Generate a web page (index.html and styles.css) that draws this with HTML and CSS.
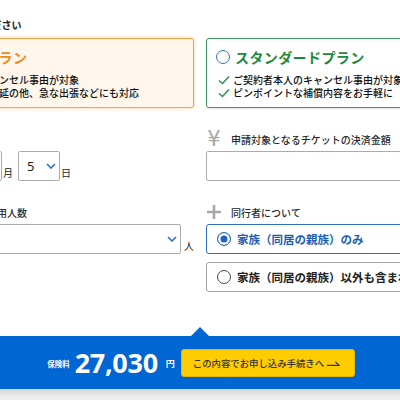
FILE: index.html
```html
<!DOCTYPE html>
<html lang="ja">
<head>
<meta charset="utf-8">
<link rel="stylesheet" href="styles.css">
</head>
<body>
<main class="page">
  <h2 class="step-title">プランを選んでください</h2>
  <div class="grid">
    <div class="plan plan-wide">
      <div class="plan-head"><span class="radio radio-orange"></span><span class="plan-name">ワイドプラン</span></div>
      <ul class="plan-points">
        <li><svg class="check" viewBox="0 0 12 10"><path d="M1 5.5 L4.5 8.5 L11 1.5"/></svg>ご本人のキャンセル事由が対象</li>
        <li><svg class="check" viewBox="0 0 12 10"><path d="M1 5.5 L4.5 8.5 L11 1.5"/></svg>交通機関の遅延の他、急な出張などにも対応</li>
      </ul>
    </div>
    <div class="plan plan-standard">
      <div class="plan-head"><span class="radio radio-blue"></span><span class="plan-name">スタンダードプラン</span></div>
      <ul class="plan-points">
        <li><svg class="check" viewBox="0 0 12 10"><path d="M1 5.5 L4.5 8.5 L11 1.5"/></svg>ご契約者本人のキャンセル事由が対象</li>
        <li><svg class="check" viewBox="0 0 12 10"><path d="M1 5.5 L4.5 8.5 L11 1.5"/></svg>ピンポイントな補償内容をお手軽に</li>
      </ul>
    </div>

    <div class="field">
      <div class="field-label"><span class="field-icon"></span>ご出発日</div>
      <div class="date-row">
        <div class="select sel-year"><span>2024</span></div><span class="unit">年</span>
        <div class="select sel-small"><span>4</span><svg class="chev" viewBox="0 0 10 6"><path d="M1 1 L5 5 L9 1"/></svg></div><span class="unit">月</span>
        <div class="select sel-small"><span>5</span><svg class="chev" viewBox="0 0 10 6"><path d="M1 1 L5 5 L9 1"/></svg></div><span class="unit">日</span>
      </div>
    </div>
    <div class="field">
      <div class="field-label"><span class="field-icon yen">¥</span>申請対象となるチケットの決済金額</div>
      <div class="input"></div>
    </div>

    <div class="field">
      <div class="field-label"><span class="field-icon"></span>参加者のご利用人数</div>
      <div class="people-row">
        <div class="select sel-wide"><span></span><svg class="chev" viewBox="0 0 10 6"><path d="M1 1 L5 5 L9 1"/></svg></div><span class="unit">人</span>
      </div>
    </div>
    <div class="field">
      <div class="field-label"><span class="field-icon"><svg viewBox="0 0 16 16" class="plus"><path d="M8 1 V15 M1 8 H15"/></svg></span>同行者について</div>
      <div class="options">
        <div class="option option-on"><span class="radio radio-dot"></span>家族（同居の親族）のみ</div>
        <div class="option"><span class="radio radio-empty"></span>家族（同居の親族）以外も含まれる</div>
      </div>
    </div>
  </div>
</main>
<footer class="bar">
  <div class="bar-inner">
    <span class="price-label">保険料</span>
    <span class="price">27,030</span>
    <span class="yen-unit">円</span>
    <button class="cta">この内容でお申し込み手続きへ<svg class="cta-arrow" viewBox="0 0 14 6"><path d="M0 5.5 H13 L9 1.5"/></svg></button>
  </div>
</footer>
<div class="below"></div>
</body>
</html>
```
FILE: styles.css
```css
* { box-sizing: border-box; }
html, body { margin: 0; padding: 0; }
body {
  width: 400px;
  height: 400px;
  overflow: hidden;
  background: #fff;
  font-family: "Noto Sans CJK JP", "Noto Sans", sans-serif;
  color: #333;
}
.page {
  width: 576px;
  margin-left: -88px;
  padding-top: 18px;
}
.step-title {
  margin: 0 0 6px;
  font-size: 10px;
  line-height: 14px;
  font-weight: 700;
  color: #222;
}
.grid {
  display: grid;
  grid-template-columns: 282px 282px;
  column-gap: 12px;
  row-gap: 24px;
}
.plan {
  height: 70px;
  border-radius: 3px;
  padding: 8px 10px 0 9px;
}
.plan-wide {
  background: #fff7ec;
  border: 1px solid #f0a445;
  box-shadow: 0 0 4px rgba(240, 160, 60, 0.45);
}
.plan-standard {
  background: #fff;
  border: 1px solid #3f9a5e;
  box-shadow: 0 1px 2px rgba(0, 0, 0, 0.12);
}
.plan-head {
  display: flex;
  align-items: center;
  gap: 5px;
  height: 20px;
}
.plan-name {
  font-size: 14px;
  font-weight: 700;
  letter-spacing: 0.4px;
  white-space: nowrap;
}
.plan-wide .plan-name { color: #ee8a1c; }
.plan-standard .plan-name { color: #1d8a3b; }
.radio {
  width: 14px;
  height: 14px;
  border-radius: 50%;
  flex: none;
  background: #fff;
}
.radio-blue { border: 1.5px solid #3a72c4; }
.radio-orange { border: 1.5px solid #ee8a1c; box-shadow: inset 0 0 0 2.5px #fff; background: #ee8a1c; }
.plan-points {
  list-style: none;
  margin: 6px 0 0;
  padding: 0 0 0 2px;
}
.plan-points li {
  display: flex;
  align-items: center;
  gap: 3px;
  font-size: 10px;
  line-height: 13px;
  font-weight: 500;
  color: #111;
  white-space: nowrap;
}
.check {
  width: 12px;
  height: 10px;
  flex: none;
  fill: none;
  stroke: #2f9650;
  stroke-width: 1.6;
}
.field-label {
  display: flex;
  align-items: center;
  gap: 9px;
  height: 14px;
  margin-bottom: 5px;
  font-size: 10px;
  font-weight: 500;
  color: #2a2a2a;
  white-space: nowrap;
}
.field-icon {
  width: 16px;
  height: 16px;
  flex: none;
  display: flex;
  align-items: center;
  justify-content: center;
  color: #a8a8a8;
}
.yen {
  font-family: "DejaVu Sans", sans-serif;
  font-size: 21px;
  line-height: 16px;
}
.plus {
  width: 16px;
  height: 16px;
  fill: none;
  stroke: #a8a8a8;
  stroke-width: 2.6;
}
.date-row, .people-row {
  display: flex;
  align-items: flex-end;
  height: 30px;
}
.select {
  height: 30px;
  border: 1px solid #ababab;
  border-radius: 2px;
  background: #fff;
  display: flex;
  align-items: center;
  justify-content: space-between;
  padding: 0 3px 0 8px;
  font-family: "Noto Sans", sans-serif;
  font-size: 13px;
  color: #222;
}
.sel-year { width: 32px; }
.sel-small { width: 42px; }
.sel-wide { flex: 1; }
.chev {
  width: 10px;
  height: 6px;
  fill: none;
  stroke: #2a70d0;
  stroke-width: 1.6;
}
.unit {
  font-size: 10px;
  line-height: 14px;
  margin: 0 5px 1px 1px;
  color: #222;
}
.people-row .unit { margin: 0 0 1px 3px; }
.input {
  height: 30px;
  border: 1px solid #ababab;
  border-radius: 2px;
}
.options {
  display: flex;
  flex-direction: column;
  gap: 8px;
}
.option {
  height: 30px;
  border: 1px solid #a0a0a0;
  border-radius: 3px;
  display: flex;
  align-items: center;
  gap: 6px;
  padding-left: 10px;
  font-size: 11.5px;
  font-weight: 700;
  color: #222;
  white-space: nowrap;
}
.option-on {
  border-color: #2d6fc2;
  color: #1b5fb5;
}
.radio-dot {
  border: 1.5px solid #2d6fc2;
  box-shadow: inset 0 0 0 2.5px #fff;
  background: #1e63c4;
}
.radio-empty { border: 1.3px solid #444; }
.bar {
  position: relative;
  margin-top: 44px;
  height: 53px;
  background: #0066d4;
}
.bar::before {
  content: "";
  position: absolute;
  left: 191px;
  top: -9px;
  border-left: 9px solid transparent;
  border-right: 9px solid transparent;
  border-bottom: 9px solid #0066d4;
}
.bar-inner {
  height: 100%;
  display: flex;
  align-items: center;
  justify-content: center;
  padding-left: 2px;
  color: #fff;
}
.price-label {
  font-size: 7.5px;
  font-weight: 700;
  margin-right: 5px;
  margin-top: 2px;
}
.price {
  font-family: "Noto Sans", sans-serif;
  font-size: 27px;
  font-weight: 700;
  line-height: 30px;
  letter-spacing: -0.3px;
  margin-right: 8px;
}
.yen-unit {
  font-size: 9px;
  font-weight: 700;
  margin-right: 6px;
  margin-top: 2px;
}
.cta {
  width: 174px;
  height: 28px;
  margin: 0;
  padding: 0 0 0 11px;
  display: flex;
  align-items: center;
  gap: 3px;
  background: #ffcc00;
  border: 1px solid #e2b400;
  border-radius: 3px;
  font-family: "Noto Sans CJK JP", sans-serif;
  font-size: 9.4px;
  font-weight: 500;
  color: #333;
}
.cta-arrow {
  width: 13px;
  height: 6px;
  fill: none;
  stroke: #333;
  stroke-width: 1.2;
}
.below {
  height: 20px;
  background: linear-gradient(#d6d6d6, #ececec 40%, #f4f4f4);
}
```
